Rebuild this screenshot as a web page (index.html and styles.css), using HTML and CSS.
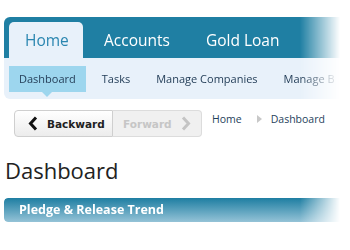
FILE: index.html
```html
<!DOCTYPE html>
<html lang="en">
<head>
    <meta charset="UTF-8">
    <title>Dashboard</title>
    <link rel="stylesheet" href="styles.css">
</head>
<body>

<div class="nav">
    <ul class="tabs">
        <li class="active">Home</li>
        <li>Accounts</li>
        <li>Gold Loan</li>
    </ul>
    <ul class="subtabs">
        <li class="active">Dashboard</li>
        <li>Tasks</li>
        <li>Manage Companies</li>
        <li>Manage B</li>
    </ul>
</div>

<div class="toolbar">
    <div class="history">
        <button class="back">
            <svg width="10" height="15" viewBox="0 0 10 15"><polyline points="8,1.5 2.5,7.5 8,13.5" fill="none" stroke="#111" stroke-width="3"/></svg>
            Backward
        </button>
        <button class="fwd" disabled>
            Forward
            <svg width="10" height="15" viewBox="0 0 10 15"><polyline points="2,1.5 7.5,7.5 2,13.5" fill="none" stroke="#c4c4c4" stroke-width="3"/></svg>
        </button>
    </div>
    <div class="crumbs">
        <span>Home</span>
        <span class="sep"></span>
        <span>Dashboard</span>
    </div>
</div>

<h1>Dashboard</h1>

<div class="section">Pledge &amp; Release Trend</div>

</body>
</html>
```

FILE: styles.css
```css
body {
    margin: 0;
    padding: 17px 4px 0 4px;
    font-family: "Open Sans", "Liberation Sans", sans-serif;
    background: white;
}

ul {
    list-style: none;
    margin: 0;
    padding: 0;
}

.nav {
    width: 340px;
    overflow: hidden;
    -webkit-mask-image: linear-gradient(to right, black 296px, transparent 336px);
    mask-image: linear-gradient(to right, black 296px, transparent 336px);
}

.tabs {
    display: flex;
    align-items: flex-end;
    gap: 5px;
    height: 41px;
    padding-left: 5px;
    background-color: #1f7fa3;
    border-radius: 6px 0 0 0;
    white-space: nowrap;
}

.tabs li {
    height: 36px;
    line-height: 36px;
    padding: 0 15px 0 16px;
    font-size: 15.5px;
    color: white;
}

.tabs li.active {
    width: 43px;
    background-color: #e8f1fa;
    color: #2a86b0;
    border-radius: 5px 5px 0 0;
}

.subtabs {
    display: flex;
    gap: 6px;
    height: 41px;
    padding: 8px 0 0 5px;
    box-sizing: border-box;
    background-color: #e8f1fa;
    border-radius: 0 0 0 6px;
    white-space: nowrap;
}

.subtabs li {
    position: relative;
    height: 26px;
    line-height: 26px;
    padding: 0 10px;
    font-size: 11px;
    color: #26405a;
}

.subtabs li.active {
    background-color: #9dd6ee;
}

.subtabs li.active::after {
    content: "";
    position: absolute;
    left: 33px;
    bottom: -5px;
    border-left: 5px solid transparent;
    border-right: 5px solid transparent;
    border-top: 5px solid #9dd6ee;
}

.toolbar {
    display: flex;
    align-items: flex-start;
    gap: 10px;
    margin: 11px 0 0 10px;
}

.history {
    display: flex;
}

.history button {
    display: flex;
    align-items: center;
    height: 27px;
    font-family: "DejaVu Sans", sans-serif;
    font-size: 10.5px;
    font-weight: bold;
    border: 1px solid #cfcfcf;
    padding: 0;
}

.back {
    width: 99px;
    padding-left: 13px !important;
    gap: 9px;
    color: #222;
    background: linear-gradient(white, #ececec);
    border-radius: 4px 0 0 4px;
}

.fwd {
    width: 89px;
    padding-left: 10px !important;
    gap: 9px;
    color: #c6c6c6;
    background-color: #f0f0f0;
    border-left: none !important;
    border-color: #dcdcdc !important;
    border-radius: 0 4px 4px 0;
}

.crumbs {
    display: flex;
    align-items: center;
    padding-top: 2px;
    font-size: 10.5px;
    color: #1f3f5c;
}

.crumbs .sep {
    border-top: 4px solid transparent;
    border-bottom: 4px solid transparent;
    border-left: 5px solid #c8c8c8;
    margin: 0 9px 0 15px;
}

h1 {
    margin: 18px 0 0 1px;
    font-size: 22px;
    font-weight: normal;
    color: #222;
    line-height: 30px;
}

.section {
    width: 336px;
    margin-top: 13px;
    height: 24px;
    line-height: 24px;
    padding-left: 15px;
    box-sizing: border-box;
    font-size: 12.5px;
    font-weight: bold;
    color: white;
    background: linear-gradient(#1e7ea2, #95c3d7);
    border-radius: 4px 0 0 4px;
    -webkit-mask-image: linear-gradient(to right, black 296px, transparent 336px);
    mask-image: linear-gradient(to right, black 296px, transparent 336px);
}
```
